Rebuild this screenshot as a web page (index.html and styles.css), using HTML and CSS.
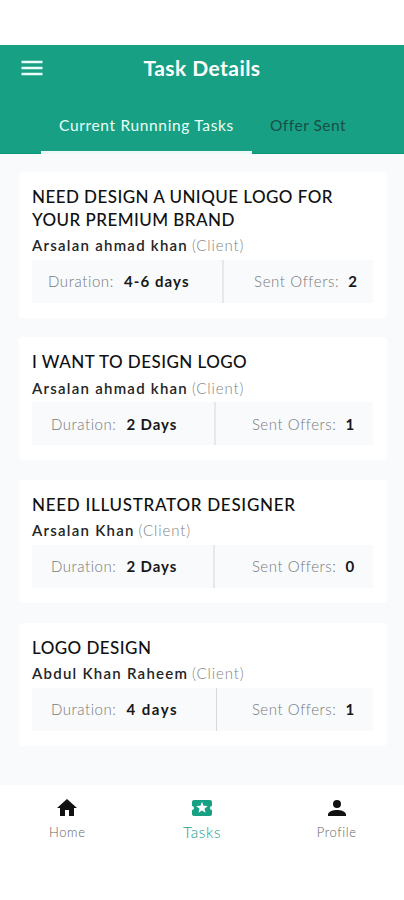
FILE: index.html
```html
<!DOCTYPE html>
<html lang="en">
<head>
<meta charset="utf-8">
<meta name="viewport" content="width=device-width, initial-scale=1">
<title>Task Details</title>
<link rel="stylesheet" href="styles.css">
</head>
<body>
<header class="header">
  <div class="bar">
    <svg class="menu" viewBox="0 0 22 16"><path d="M.500 2h21M.500 8h21M.500 14h21" stroke="currentColor" stroke-width="2.300"/></svg>
    <h1 class="heading">Task Details</h1>
  </div>
  <nav class="tabs">
    <a class="tab tab-active">Current Runnning Tasks</a>
    <a class="tab tab-other">Offer Sent</a>
  </nav>
</header>
<main class="list">
  <article class="card card-a">
    <h2 class="title">NEED DESIGN A UNIQUE LOGO FOR<br>YOUR PREMIUM BRAND</h2>
    <p class="client"><b>Arsalan ahmad khan</b> <span>(Client)</span></p>
    <div class="stats"><div class="duration"><span class="label">Duration:</span><b class="value">4-6 days</b></div><div class="offers"><span class="label">Sent Offers:</span><b class="value">2</b></div></div>
  </article>
  <article class="card card-b">
    <h2 class="title">I WANT TO DESIGN LOGO</h2>
    <p class="client"><b>Arsalan ahmad khan</b> <span>(Client)</span></p>
    <div class="stats"><div class="duration"><span class="label">Duration:</span><b class="value">2 Days</b></div><div class="offers"><span class="label">Sent Offers:</span><b class="value">1</b></div></div>
  </article>
  <article class="card card-c">
    <h2 class="title">NEED ILLUSTRATOR DESIGNER</h2>
    <p class="client"><b>Arsalan Khan</b> <span>(Client)</span></p>
    <div class="stats"><div class="duration"><span class="label">Duration:</span><b class="value">2 Days</b></div><div class="offers"><span class="label">Sent Offers:</span><b class="value">0</b></div></div>
  </article>
  <article class="card card-d">
    <h2 class="title">LOGO DESIGN</h2>
    <p class="client"><b>Abdul Khan Raheem</b> <span>(Client)</span></p>
    <div class="stats"><div class="duration"><span class="label">Duration:</span><b class="value">4 days</b></div><div class="offers"><span class="label">Sent Offers:</span><b class="value">1</b></div></div>
  </article>
</main>
<nav class="bottom">
  <a class="item"><svg class="icon" viewBox="0 0 24 24"><path d="M10 20v-6h4v6h5v-8h3L12 3 2 12h3v8z"/></svg><span>Home</span></a>
  <a class="item item-active"><svg class="icon icon-ticket" viewBox="0 0 24 24"><path d="M20 12c0-1.1.9-2 2-2V6c0-1.1-.9-2-2-2H4c-1.1 0-2 .9-2 2v4c1.1 0 2 .9 2 2s-.9 2-2 2v4c0 1.1.9 2 2 2h16c1.1 0 2-.9 2-2v-4c-1.1 0-2-.9-2-2zm-4.42 4.8L12 14.5l-3.58 2.3 1.08-4.12-3.29-2.69 4.24-.25L12 5.8l1.54 3.95 4.24.25-3.29 2.69z"/></svg><span>Tasks</span></a>
  <a class="item"><svg class="icon" viewBox="0 0 24 24"><path d="M12 12a4 4 0 1 0 0-8 4 4 0 0 0 0 8zm0 2c-3.3 0-9 1.400-9 4.500V20h18v-1.500c0-3.100-5.700-4.500-9-4.500z"/></svg><span>Profile</span></a>
</nav>
</body>
</html>
```
FILE: styles.css
```css
* { box-sizing: border-box; }
body { margin: 0; padding-top: 45px; height: 900px; display: flex; flex-direction: column; background: #fff; font-family: Lato, sans-serif; color: #151617; overflow: hidden; }
h1, h2, p { margin: 0; }
.header { height: 109px; background: #18a085; color: #fff; display: flex; flex-direction: column; border-bottom: 1px solid #0c9678; flex: none; }
.bar { height: 46px; display: grid; grid-template-columns: 44px 1fr 44px; align-items: center; }
.menu { width: 22px; height: 16px; margin-left: 21px; color: #eafff9; }
.heading { font-size: 21px; line-height: 26px; font-weight: 700; text-align: center; letter-spacing: .45px; }
.tabs { flex: 1; display: flex; padding-left: 41px; margin-bottom: -1px; }
.tab { display: flex; justify-content: center; padding-top: 24px; font-size: 15.500px; line-height: 20px; white-space: nowrap; }
.tab-active { width: 211px; border-bottom: 3px solid #eef8f7; color: #e9fff8; letter-spacing: .66px; }
.tab-other { padding-left: 18px; color: #164f48; letter-spacing: .5px; }
.list { height: 631px; flex: none; background: #f8fafc; padding: 18px 17px 0 19px; display: flex; flex-direction: column; gap: 19.700px; }
.card { background: #fff; border-radius: 4px; padding: 14px 14px 15px 13px; }
.title { font-size: 17px; line-height: 22.500px; font-weight: 500; letter-spacing: .45px; white-space: nowrap; color: #101112; }
.client { font-size: 15px; line-height: 28.500px; white-space: nowrap; color: #808284; }
.client b { font-weight: 600; color: #242526; letter-spacing: 1.25px; }
.client span { font-weight: 300; letter-spacing: .9px; }
.stats { height: 43px; background: #f8fafb; display: flex; font-size: 15px; }
.duration { width: 184px; padding-left: 19px; border-right: 2px solid #e6e9eb; display: flex; align-items: center; white-space: nowrap; }
.offers { flex: 1; padding-right: 18px; display: flex; align-items: center; justify-content: flex-end; white-space: nowrap; }
.label { font-weight: 300; color: #77797b; letter-spacing: .55px; margin-right: 10px; }
.offers .label { margin-right: 9px; }
.value { font-weight: 700; color: #17181a; letter-spacing: .9px; }
.card-a .duration { width: 192px; padding-left: 16px; }
.card-a .label { letter-spacing: .6px; }
.card-a .value { letter-spacing: 1.100px; }
.card-a .offers { padding-right: 15px; }
.card-c .title { letter-spacing: .72px; }
.card-c .duration { width: 183px; }
.card-d .duration { width: 185px; border-right: 1px solid #d5d9db; }
.card-d .duration .value { letter-spacing: 1.500px; }
.bottom { flex: 1; display: grid; grid-template-columns: repeat(3, 1fr); padding-top: 11px; }
.item { display: flex; flex-direction: column; align-items: center; font-size: 13px; line-height: 20px; letter-spacing: .6px; color: #626465; font-weight: 300; gap: 2px; }
.icon { width: 24px; height: 24px; fill: #111; }
.item-active { color: #18a085; font-size: 15.500px; }
.icon-ticket { width: 26px; fill: #18a085; }
```
